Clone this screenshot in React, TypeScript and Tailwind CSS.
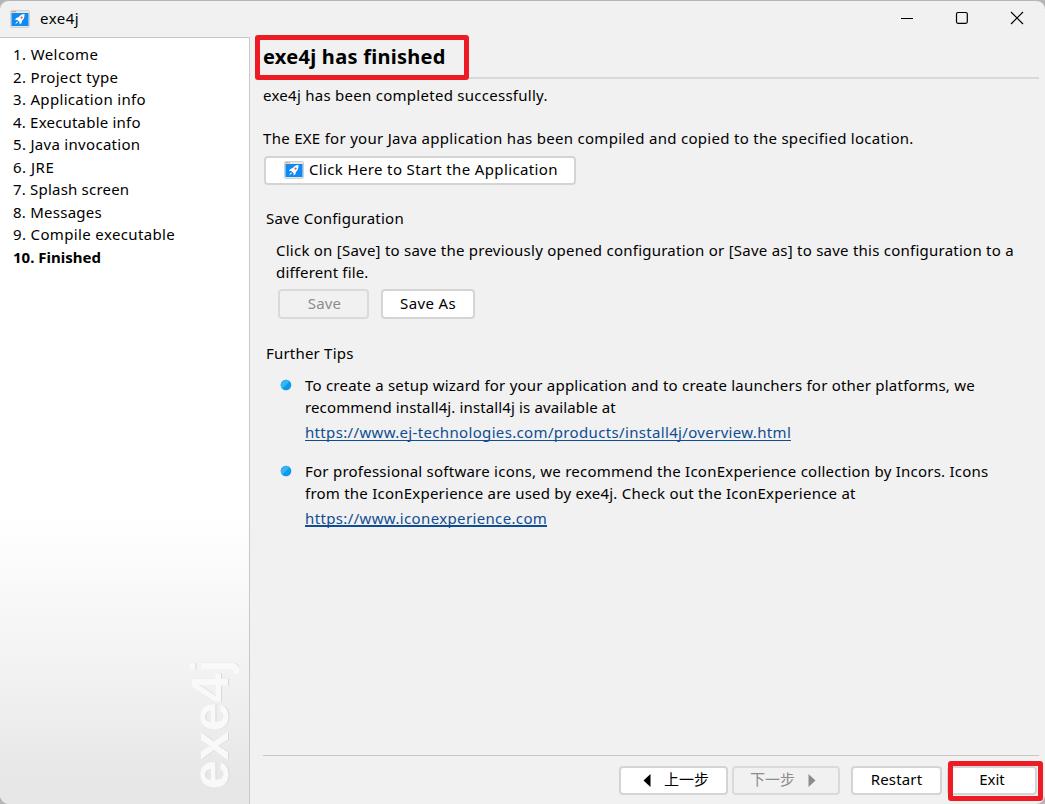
import React from "react";

const steps = [
  { label: "1. Welcome", cls: "tracking-[0.4px]" },
  { label: "2. Project type", cls: "tracking-[0.35px]" },
  { label: "3. Application info", cls: "tracking-[0.32px]" },
  { label: "4. Executable info", cls: "tracking-[0.2px]" },
  { label: "5. Java invocation", cls: "tracking-[0.3px]" },
  { label: "6. JRE", cls: "tracking-[0.5px]" },
  { label: "7. Splash screen", cls: "tracking-[0.2px]" },
  { label: "8. Messages", cls: "tracking-[0.25px]" },
  { label: "9. Compile executable", cls: "tracking-[0.36px]" },
  { label: "10. Finished", cls: "font-bold" },
];

function RocketIcon() {
  return (
    <svg width="20" height="18" viewBox="0 0 20 18" className="shrink-0">
      <rect x="0.5" y="0.5" width="19" height="17" rx="1" fill="#e4e6e8" stroke="#cfd2d5" />
      <path d="M1.500 1.600h4.500" stroke="#f4876f" strokeWidth="1.200" strokeDasharray="1.200 0.400" />
      <rect x="1.5" y="3" width="17" height="13" fill="#0d8bf2" />
      <path d="M14.500 4c-2.600 0-4.300 1-5.600 3L6.300 8l-1.300 2 2.300.1 2.200 2L9.700 14.500l1.800-1.500.6-2.300C13.800 9.200 14.800 7 14.500 4z" fill="#fff" />
      <path d="M7 11.300L5 14.500l3-2.200z" fill="#fff" />
      <circle cx="11.600" cy="7.600" r="1.100" fill="#e8503c" />
    </svg>
  );
}

function Bullet() {
  return (
    <svg width="12" height="12" viewBox="0 0 12 12" className="mt-[5px] shrink-0">
      <circle cx="6" cy="6" r="5.300" fill="#0c9ae8" />
      <path d="M2.250 9.750A5.300 5.300 0 0 1 9.750 2.250z" fill="#35b3f3" />
    </svg>
  );
}

function Button({ className, disabled, children }: { className: string; disabled?: boolean; children: React.ReactNode }) {
  return (
    <button
      disabled={disabled}
      className={
        "flex shrink-0 items-center whitespace-nowrap rounded-[4px] border-2 pb-[3px] " +
        (disabled ? "border-[#dadada] bg-[#f1f1f1] text-[#8c8c8c] " : "border-[#d4d4d4] bg-white text-black ") +
        className
      }
    >
      {children}
    </button>
  );
}

export default function App() {
  return (
    <div className="relative h-[804px] w-[1045px] overflow-hidden bg-[#b5b5b5] font-['Noto_Sans','Noto_Sans_CJK_SC',sans-serif] text-[15px] leading-[22px] text-black">
      <div className="flex h-full flex-col overflow-hidden rounded-[9px] border-t border-[#b5b5b5] bg-[#f1f1f1]">
        <header className="flex h-[36px] shrink-0 items-center pl-[10px]">
          <RocketIcon />
          <span className="ml-[10px] pb-[2px] tracking-[0.5px]">exe4j</span>
          <svg width="130" height="18" viewBox="0 0 130 18" className="mb-[2px] ml-auto mr-[16px]" fill="none" stroke="#000" strokeWidth="1.200">
            <path d="M2 9.500h12" />
            <rect x="57.500" y="3.500" width="10.800" height="10.800" rx="1.500" />
            <path d="M112 3l12 12M124 3l-12 12" />
          </svg>
        </header>
        <div className="flex min-h-0 grow">
          <aside className="flex w-[250px] shrink-0 flex-col justify-between border-r border-t border-[#c8c8c8] bg-[linear-gradient(to_bottom,#fff_0,#fff_478px,#f2f2f2_635px,#e7e7e7_740px,#e7e7e7_100%)] pb-[15px] pl-[13px] pt-[5px]">
            <ul>
              {steps.map((s) => (
                <li key={s.label} className={"h-[22.5px] whitespace-nowrap " + s.cls}>
                  {s.label}
                </li>
              ))}
            </ul>
            <div className="flex justify-end pr-[15px]">
              <span className="rotate-180 font-['Liberation_Sans',sans-serif] text-[52px] font-bold leading-[48px] text-[#f9f9f9] [text-shadow:0_1px_0_#d8d8d8] [writing-mode:vertical-rl]">
                exe4j
              </span>
            </div>
          </aside>
          <main className="flex min-w-0 grow flex-col pl-[13px] pr-[6px]">
            <h1 className="h-[42px] shrink-0 border-b-2 border-[#d9d9d9] pt-[6px] text-[20px] font-bold leading-[28px] tracking-[0.27px]">exe4j has finished</h1>
            <p className="mt-[5px] tracking-[0.27px]">exe4j has been completed successfully.</p>
            <p className="mt-[21px] whitespace-nowrap tracking-[0.29px]">The EXE for your Java application has been compiled and copied to the specified location.</p>
            <Button className="ml-[1px] mt-[7px] h-[29px] w-[312px] gap-[5px] pl-[18px]">
              <span className="pt-[2px]"><RocketIcon /></span>
              <span className="tracking-[0.36px]">Click Here to Start the Application</span>
            </Button>
            <section className="mt-[22px] pl-[3px]">
              <h2 className="tracking-[0.22px]">Save Configuration</h2>
              <div className="mt-[10px] whitespace-nowrap pl-[10px]">
                <p className="tracking-[0.24px]">Click on [Save] to save the previously opened configuration or [Save as] to save this configuration to a</p>
                <p className="tracking-[0.15px]">different file.</p>
                <div className="mt-[6px] flex gap-[12px] pl-[2px]">
                  <Button disabled className="h-[30px] w-[91px] justify-center pl-[2px] tracking-[0.2px]">Save</Button>
                  <Button className="h-[30px] w-[94px] justify-center tracking-[0.35px]">Save As</Button>
                </div>
              </div>
            </section>
            <section className="mt-[23px] whitespace-nowrap pl-[3px]">
              <h2 className="tracking-[0.2px]">Further Tips</h2>
              <ul className="mt-[10px] flex flex-col gap-[17px] pl-[14px]">
                <li className="flex gap-[13px]">
                  <Bullet />
                  <div>
                    <p className="tracking-[0.22px]">To create a setup wizard for your application and to create launchers for other platforms, we</p>
                    <p className="tracking-[0.13px]">recommend install4j. install4j is available at</p>
                    <a className="mt-[3px] inline-block h-[20px] border-b border-[#0f4d92] tracking-[0.34px] text-[#0f4d92]">https://www.ej-technologies.com/products/install4j/overview.html</a>
                  </div>
                </li>
                <li className="flex gap-[13px]">
                  <Bullet />
                  <div>
                    <p className="tracking-[0.24px]">For professional software icons, we recommend the IconExperience collection by Incors. Icons</p>
                    <p className="tracking-[0.23px]">from the IconExperience are used by exe4j. Check out the IconExperience at</p>
                    <a className="mt-[3px] inline-block h-[20px] border-b-2 border-[#0f4d92] tracking-[0.36px] text-[#0f4d92]">https://www.iconexperience.com</a>
                  </div>
                </li>
              </ul>
            </section>
            <footer className="mt-auto flex h-[49px] shrink-0 border-t border-[#c8c8c8] pt-[10px]">
              <Button className="ml-[356px] h-[29px] w-[109px] gap-[13px] pl-[22px]">
                <svg width="8" height="13" viewBox="0 0 8 13" className="mt-[2px]"><path d="M7.500 0v13L0.500 6.500z" /></svg>
                <span>上一步</span>
              </Button>
              <Button disabled className="ml-[4px] h-[29px] w-[108px] gap-[13px] pl-[16px]">
                <span>下一步</span>
                <svg width="8" height="13" viewBox="0 0 8 13" fill="#8c8c8c" className="mt-[2px]"><path d="M0.500 0v13l7-6.500z" /></svg>
              </Button>
              <Button className="ml-[11px] h-[29px] w-[91px] justify-center tracking-[0.15px]">Restart</Button>
              <Button className="ml-[5px] h-[29px] w-[90px] justify-center">Exit</Button>
            </footer>
          </main>
        </div>
      </div>
      <div className="absolute left-[255px] top-[35px] h-[45px] w-[214px] rounded-[3px] border-[5px] border-[#ed1c24]" />
      <div className="absolute left-[948px] top-[761px] h-[40px] w-[95px] rounded-[3px] border-[5px] border-[#ed1c24]" />
    </div>
  );
}
